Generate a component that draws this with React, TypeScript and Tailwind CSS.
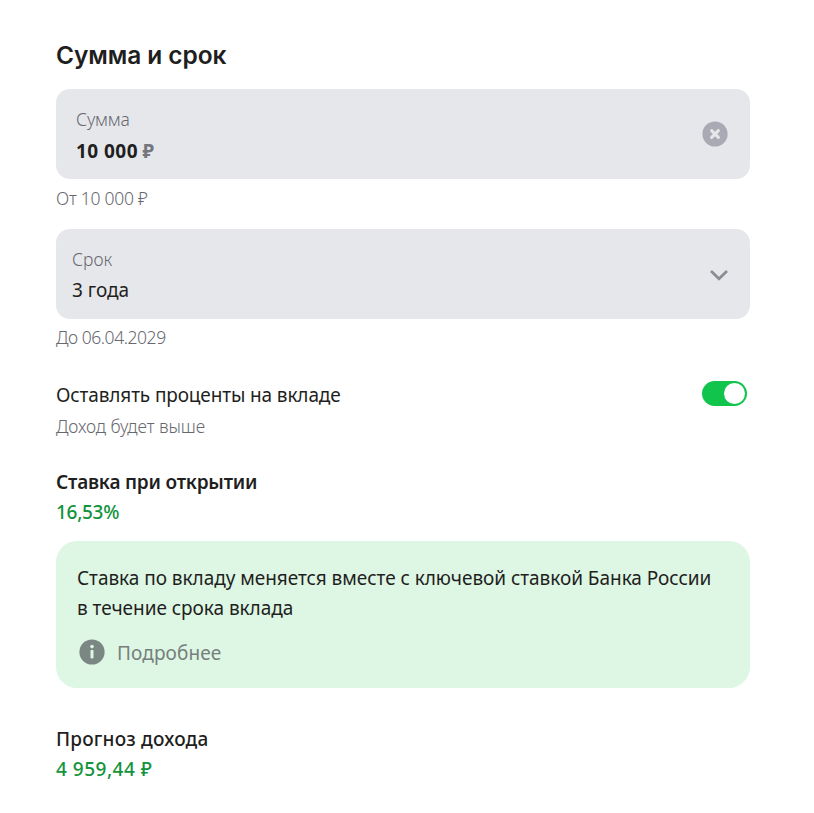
import React, { useState } from "react";

const FieldIconClear = () => (
  <svg width="26" height="26" viewBox="0 0 26 26" fill="none">
    <circle cx="13" cy="13" r="12.6" fill="#aaaab4" />
    <path d="M9.6 9.6l6.8 6.8M16.4 9.6l-6.8 6.8" stroke="#e6e7eb" strokeWidth="3" strokeLinecap="round" />
  </svg>
);

const ChevronIcon = () => (
  <svg width="20" height="12" viewBox="0 0 20 12" fill="none">
    <path d="M2 2L10 9.8L18 2" stroke="#8b8b92" strokeWidth="2.7" />
  </svg>
);

const InfoIcon = () => (
  <svg width="26" height="26" viewBox="0 0 26 26">
    <circle cx="13" cy="13" r="12.6" fill="#7b8783" />
    <circle cx="13" cy="7.6" r="1.8" fill="#def6e4" />
    <rect x="11.5" y="11" width="3" height="8.4" rx="0.8" fill="#def6e4" />
  </svg>
);

export default function DepositForm() {
  const [amount, setAmount] = useState<string>("10 000");
  const [keepInterest, setKeepInterest] = useState<boolean>(true);

  return (
    <div className="h-[813px] bg-white pl-14 pr-16 pt-10 font-['Noto_Sans',sans-serif] text-[#1f1f22]">
      <h1 className="h-[49px] whitespace-nowrap font-['Inter',sans-serif] text-[24.5px] font-semibold leading-[31px] tracking-[-0.1px]">
        Сумма и срок
      </h1>

      <div className="flex h-[90px] items-center justify-between rounded-[14px] bg-[#e6e7eb] pl-5 pr-[22px]">
        <div className="whitespace-nowrap pt-1">
          <div className="text-[17.5px] font-light leading-[30px] tracking-[-0.2px] text-[#68686f]">Сумма</div>
          <div className="text-[19px] font-bold leading-[34px] tracking-[0.45px]">
            {amount} <span className="-ml-px text-[#75757d]">₽</span>
          </div>
        </div>
        <button onClick={() => setAmount("")}>
          <FieldIconClear />
        </button>
      </div>
      <div className="h-[50px] whitespace-nowrap pt-1 text-[17.5px] font-light leading-[31px] tracking-[-0.25px] text-[#68686f]">От 10 000 ₽</div>

      <div className="flex h-[90px] items-center justify-between rounded-[14px] bg-[#e6e7eb] pl-4 pr-[21px]">
        <div className="whitespace-nowrap pt-px">
          <div className="text-[17.5px] font-light leading-[30px] text-[#68686f]">Срок</div>
          <div className="text-[19px] leading-[32px]">3 года</div>
        </div>
        <div className="pt-px">
          <ChevronIcon />
        </div>
      </div>
      <div className="h-[61px] whitespace-nowrap pt-[3px] text-[17.5px] font-light leading-[30px] tracking-[-0.45px] text-[#68686f]">До 06.04.2029</div>

      <div className="flex h-[87px] justify-between pr-[3px]">
        <div className="whitespace-nowrap">
          <div className="text-[19px] leading-[30px] tracking-[-0.13px]">Оставлять проценты на вкладе</div>
          <div className="text-[17.5px] font-light leading-[32px] tracking-[-0.08px] text-[#68686f]">Доход будет выше</div>
        </div>
        <button
          onClick={() => setKeepInterest(!keepInterest)}
          className={`mt-px flex h-[25px] w-[45px] items-center rounded-full px-0.5 ${keepInterest ? "justify-end bg-[#10c44c]" : "bg-gray-300"}`}
        >
          <span className="size-[21px] rounded-full bg-white" />
        </button>
      </div>

      <div className="h-[74px] whitespace-nowrap text-[19px] leading-[30px]">
        <div className="font-semibold tracking-[-0.2px]">Ставка при открытии</div>
        <div className="font-medium tracking-[-0.3px] text-[#12933c]">16,53%</div>
      </div>

      <div className="h-[147px] rounded-[21px] bg-[#def6e4] pl-[21px] pt-[22px]">
        <p className="whitespace-nowrap text-[19px] leading-[30px] tracking-[-0.04px]">
          Ставка по вкладу меняется вместе с ключевой ставкой Банка России
          <br />в течение срока вклада
        </p>
        <div className="flex h-[60px] items-center gap-3 pl-0.5">
          <div className="-mt-0.5">
            <InfoIcon />
          </div>
          <span className="text-[19px] leading-[30px] tracking-[0.12px] text-[#75807c]">Подробнее</span>
        </div>
      </div>

      <div className="mt-9 whitespace-nowrap text-[19px] leading-[30px]">
        <div className="font-medium tracking-[0.2px]">Прогноз дохода</div>
        <div className="font-medium tracking-[0.5px] text-[#12933c]">4 959,44 ₽</div>
      </div>
    </div>
  );
}
